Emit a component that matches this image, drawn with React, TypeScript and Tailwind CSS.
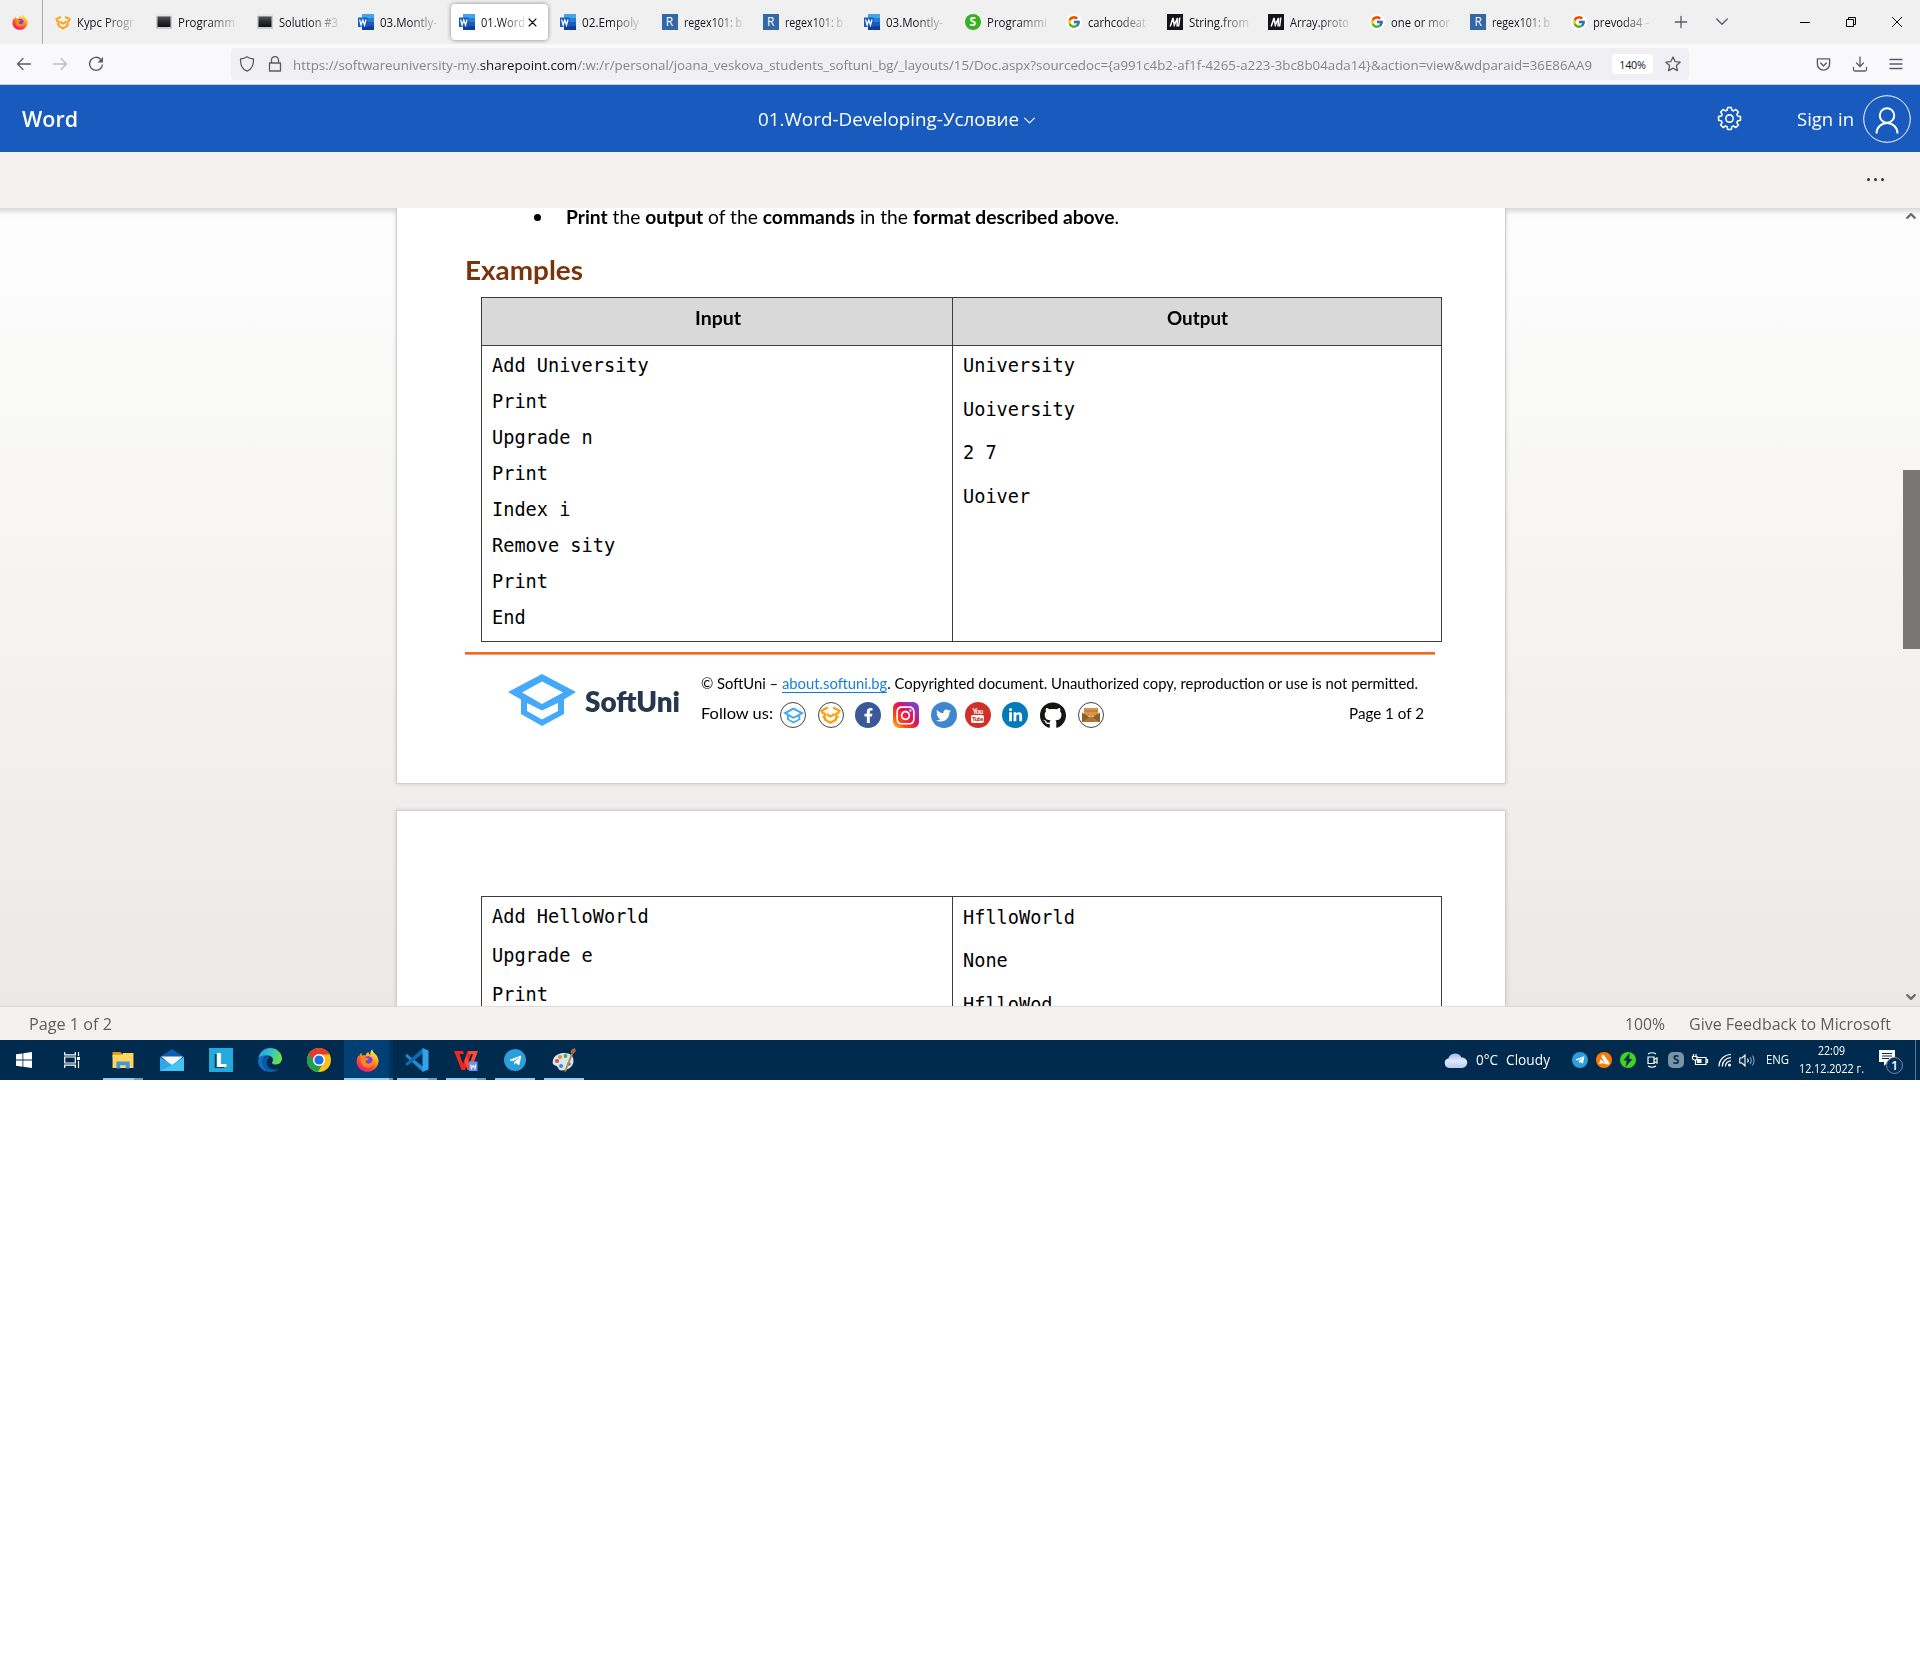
import React, { useLayoutEffect, useRef, useState } from "react";
import { FcGoogle } from "react-icons/fc";
import { FaGithub, FaFacebookF, FaTwitter, FaLinkedinIn, FaInstagram, FaTelegramPlane } from "react-icons/fa";

/* A single line of text squeezed or stretched to a given width. */
function Fit({ w, className = "", children }: { w: number; className?: string; children: React.ReactNode }) {
  const ref = useRef<HTMLSpanElement>(null);
  const [scale, setScale] = useState(1);
  useLayoutEffect(() => {
    if (ref.current && ref.current.offsetWidth) setScale(w / ref.current.getBoundingClientRect().width);
  }, []);
  return (
    <span className={"block shrink-0 whitespace-nowrap " + className} style={{ width: w }}>
      <span ref={ref} className="inline-block origin-left" style={{ transform: `scaleX(${scale})` }}>
        {children}
      </span>
    </span>
  );
}

const ui = "font-['Open_Sans','Noto_Sans',sans-serif]";
const doc = "font-['Lato','Open_Sans',sans-serif]";

function Firefox({ className }: { className: string }) {
  return (
    <svg viewBox="0 0 24 24" className={className}>
      <defs>
        <linearGradient id="ffx" x1="0.8" y1="0.05" x2="0.25" y2="1">
          <stop offset="0" stopColor="#fff44f" />
          <stop offset="0.35" stopColor="#ffa41c" />
          <stop offset="0.65" stopColor="#ff4a38" />
          <stop offset="1" stopColor="#e8148a" />
        </linearGradient>
      </defs>
      <path fill="url(#ffx)" d="M5.500 4 6.500 7C8 6.400 9 6.600 10 7c.6-2.500 1.800-3.500 3-4 0 1.600.8 2.400 1.800 3C15 3.500 15.500 1.500 17 .3c0 3 3 4.700 4.800 6.700C22.800 9 23.600 11 23.500 13c-.3 6-5.500 10.800-11.500 10.800S.7 19.500.6 13C.6 10 2 7.500 3 6.500c0 .6.200 1 .4 1.300C3.700 6.300 4.500 5 5.500 4Z" />
      <circle cx="12.500" cy="12.500" r="5" fill="#7d3fe0" />
      <path fill="#ff8a16" d="M5 10.500c1.500-2 4-2.300 6-1.300l2.500.9c-.5 1.200-2.500 1.200-3.300 2-.8 1 .2 3 2.600 3.200 2.500.1 4.500-1.600 4.700-4.300 1.600 3.600-.5 8.200-5 8.200S4.500 15.500 5 10.500Z" />
    </svg>
  );
}

function WordIcon() {
  return (
    <svg viewBox="0 0 16 16" className="size-4">
      <path fill="#41a5ee" d="M4 0h12v4H4z" />
      <path fill="#2b7cd3" d="M4 4h12v4H4z" />
      <path fill="#185abd" d="M4 8h12v4H4z" />
      <path fill="#103f91" d="M4 12h12v4H4z" />
      <path fill="#185abd" d="M0 3.500h9.500v9.500H0z" />
      <path fill="none" stroke="#fff" strokeWidth="1.300" d="m1.600 5.500 1.500 5.500 1.700-5 1.700 5L8 5.500" />
    </svg>
  );
}

function ConsoleIcon() {
  return (
    <svg viewBox="0 0 16 16" className="size-4">
      <defs>
        <linearGradient id="con" x1="0" y1="0" x2="0" y2="1">
          <stop offset="0" stopColor="#555" />
          <stop offset="0.5" stopColor="#2a2a2a" />
          <stop offset="1" stopColor="#111" />
        </linearGradient>
      </defs>
      <path fill="#c9cdd0" d="M0 0h16v15H0z" />
      <path fill="#e4e6e8" d="M0 0h16v2H0z" />
      <path fill="url(#con)" d="M1.500 2.500h13V13h-13z" />
    </svg>
  );
}

function CapBraces({ className }: { className: string }) {
  return (
    <svg viewBox="0 0 68 58" className={className} fill="none" stroke="#ff9f0a" strokeWidth="7.500">
      <path d="M25 5 5 15l4 8 7 2v6l-4 4 4 3v6l18 10 18-10v-6l4-3-4-4v-6l7-2 4-8L43 5M25 24v5l9 5 9-5v-5" />
    </svg>
  );
}

function CapLogo({ className }: { className: string }) {
  return (
    <svg viewBox="0 0 68 52" className={className}>
      <path
        fill="#44a9f8"
        fillRule="evenodd"
        d="M34 0 68 18 56 25.500V40L34 52 13 40V25.500L0 18ZM34 7.500 14 18.500 34 30 55 18.500ZM19 29v8l15 8.500L50 37v-8L34 36.500Z"
      />
    </svg>
  );
}

function RIcon() {
  return <span className={`flex size-4 items-center justify-center bg-[#3467a6] text-[12px] leading-none text-white ${ui}`}>R</span>;
}
function SIcon() {
  return <span className={`flex size-4 items-center justify-center rounded-full bg-[#37b024] text-[12px] leading-none font-bold text-white ${ui}`}>S</span>;
}
function MdnIcon() {
  return (
    <svg viewBox="0 0 16 16" className="size-4">
      <path fill="#15141a" d="M0 0h16v16H0z" />
      <path fill="none" stroke="#fff" strokeWidth="1.500" d="M3.200 12.500 6 4l1.300 7L10.500 4l-.5 8.500M12.800 3.500l-1.200 9" />
    </svg>
  );
}
function GIcon() {
  return (
    <span className="flex size-4 items-center justify-center rounded-full bg-white">
      <FcGoogle className="size-[14px]" />
    </span>
  );
}

const tabs: { icon: React.ReactNode; text: string; w: number; active?: boolean }[] = [
  { icon: <CapBraces className="h-[15px] w-4" />, text: "Курс Progr", w: 57 },
  { icon: <ConsoleIcon />, text: "Programm", w: 57 },
  { icon: <ConsoleIcon />, text: "Solution #3", w: 59 },
  { icon: <WordIcon />, text: "03.Montly-", w: 57 },
  { icon: <WordIcon />, text: "01.Word", w: 44, active: true },
  { icon: <WordIcon />, text: "02.Empoly", w: 57 },
  { icon: <RIcon />, text: "regex101: b", w: 58 },
  { icon: <RIcon />, text: "regex101: b", w: 58 },
  { icon: <WordIcon />, text: "03.Montly-", w: 57 },
  { icon: <SIcon />, text: "Programmi", w: 60 },
  { icon: <GIcon />, text: "carhcodeat", w: 58 },
  { icon: <MdnIcon />, text: "String.from", w: 60 },
  { icon: <MdnIcon />, text: "Array.proto", w: 59 },
  { icon: <GIcon />, text: "one or mor", w: 59 },
  { icon: <RIcon />, text: "regex101: b", w: 58 },
  { icon: <GIcon />, text: "prevoda4 -", w: 56 },
];

function Stroke({ d, className, w = 1.4 }: { d: string; className: string; w?: number }) {
  return (
    <svg viewBox="0 0 16 16" className={"shrink-0 " + className} fill="none" stroke="currentColor" strokeWidth={w} strokeLinecap="round" strokeLinejoin="round">
      <path d={d} />
    </svg>
  );
}

function TabBar() {
  return (
    <div className={`flex h-11 items-center bg-[#f0f0f0] text-[12px] text-[#15141a] ${ui}`}>
      <div className="flex h-full w-[43px] shrink-0 items-center border-r border-[#aeaeb0] pl-3">
        <Firefox className="size-4" />
      </div>
      <div className="flex pl-1">
        {tabs.map((t, i) => (
          <div key={i} className="w-[101.1px] shrink-0">
            <div className={"flex h-9 w-[97px] items-center rounded pl-2 " + (t.active ? "bg-white shadow-[0_0_4px_rgba(0,0,0,0.45)]" : "")}>
              <span className="flex w-4 shrink-0 justify-center">{t.icon}</span>
              <Fit w={t.w} className="mt-[2px] ml-1.5 [mask-image:linear-gradient(to_right,black_50%,rgba(0,0,0,0.15))]">
                {t.text}
              </Fit>
              {t.active && <Stroke d="M3 3l10 10M13 3l-10 10" className="ml-[2px] size-[11px]" w={1.8} />}
            </div>
          </div>
        ))}
      </div>
      <div className="flex flex-1 items-center text-[#5b5b66]">
        <Stroke d="M8 1.500v13M1.500 8h13" className="ml-[9px] size-[14px]" w={1.5} />
        <Stroke d="M2 4.500l6 6 6-6" className="ml-[27px] size-[14px]" w={1.6} />
        <div className="ml-auto flex items-center pr-[17px] text-black">
          <span className="h-px w-[10px] bg-black" />
          <svg viewBox="0 0 12 12" className="ml-[35px] size-[12px]" fill="none" stroke="currentColor">
            <path d="M1.500 3.500h7v7h-7zM3.500 3.500v-2h7v7h-2" />
          </svg>
          <svg viewBox="0 0 12 12" className="ml-[34px] size-[12px]" fill="none" stroke="currentColor">
            <path d="m1 1 10 10M11 1 1 11" />
          </svg>
        </div>
      </div>
    </div>
  );
}

function UrlBar() {
  return (
    <div className={`flex h-[41px] items-center border-b border-[#ccc] bg-[#f9f9fb] text-[#5b5b66] ${ui}`}>
      <Stroke d="M1.500 8h13M7 2.500 1.500 8 7 13.500" className="ml-4 size-4" w={1.3} />
      <Stroke d="M1.500 8h13M9 2.500 14.500 8 9 13.500" className="ml-5 size-4 text-[#bcbcc0]" w={1.3} />
      <svg viewBox="0 0 16 16" className="ml-5 size-4" fill="none" stroke="currentColor" strokeWidth="1.400">
        <path d="M12.800 3.400A6.500 6.500 0 1 0 14.500 8.500" />
        <path fill="currentColor" stroke="none" d="M15 1v5.500H9.500z" />
      </svg>
      <div className="ml-[127px] flex h-8 w-[1458px] shrink-0 items-center rounded bg-[#f0f0f4] pl-2">
        <Stroke d="M8 .8c2 1.600 4 2 6.500 2.200.2 5-1 10-6.500 12.200C2.500 13 1.300 8 1.500 3 4 2.800 6 2.400 8 .8Z" className="size-4" w={1.3} />
        <Stroke d="M2.500 7h11v8h-11zM4.500 7V4a3.500 3.500 0 0 1 7 0v3" className="ml-3 size-4" w={1.3} />
        <Fit w={1299} className="mt-[2px] ml-[10px] text-[13.5px] text-[#84848b]">
          https://softwareuniversity-my.<span className="text-[#15141a]">sharepoint.com</span>
          {"/:w:/r/personal/joana_veskova_students_softuni_bg/_layouts/15/Doc.aspx?sourcedoc={a991c4b2-af1f-4265-a223-3bc8b04ada14}&action=view&wdparaid=36E86AA9"}
        </Fit>
        <span className="ml-5 flex h-5 w-[41px] items-center justify-center rounded-[3px] bg-white pt-[2px] text-[10.8px] tracking-[-0.2px] text-[#15141a]">140%</span>
        <Stroke d="M8 1l2.100 4.600 5 .6-3.700 3.400 1 5L8 12.100 3.600 14.600l1-5L.9 6.200l5-.6z" className="ml-3 size-4" w={1.3} />
      </div>
      <div className="ml-auto flex items-center pr-4">
        <Stroke d="M1.500 2h13v5.500a6.500 6.500 0 0 1-13 0zM5 6.500l3 3 3-3" className="size-[15px]" w={1.5} />
        <Stroke d="M8 1v9M4.500 7 8 10.500 11.500 7M1.500 11.500V13.500q0 1.500 1.500 1.500h10q1.500 0 1.500-1.500V11.500" className="ml-[21px] size-4" w={1.3} />
        <Stroke d="M2 3.500h12M2 8h12M2 12.500h12" className="ml-5 size-4" w={1.3} />
      </div>
    </div>
  );
}

function WordHeader() {
  return (
    <div className={`flex h-[67px] items-center bg-[#185abd] text-white ${ui}`}>
      <Fit w={56} className="mt-[3px] ml-[22px] text-[21px] font-semibold">Word</Fit>
      <Fit w={261} className="mt-px ml-[680px] text-[19px]">01.Word-Developing-Условие</Fit>
      <Stroke d="M2 5l6 6 6-6" className="mt-[3px] ml-[4px] size-[13px]" w={1.4} />
      <svg viewBox="0 0 24 24" className="ml-[681px] size-[25px]" fill="none" stroke="currentColor" strokeWidth="1.500" strokeLinejoin="round">
        <path d="M10.300 1.500h3.400l.6 2.600 1.500.6 2.300-1.400 2.400 2.400-1.400 2.300.6 1.500 2.800.6v3.600l-2.800.7-.6 1.500 1.400 2.300-2.400 2.400-2.300-1.400-1.500.6-.6 2.700h-3.400l-.6-2.700-1.500-.6-2.300 1.400-2.400-2.400 1.400-2.300-.6-1.500-2.800-.7v-3.600l2.800-.6.6-1.500-1.400-2.300 2.400-2.400 2.300 1.400 1.500-.6z" />
        <circle cx="12" cy="12" r="3.500" />
      </svg>
      <Fit w={57} className="mt-px ml-[55px] text-[18.5px]">Sign in</Fit>
      <svg viewBox="0 0 48 48" className="ml-[9px] size-12" fill="none" stroke="currentColor">
        <circle cx="24" cy="24" r="23.300" />
        <circle cx="24" cy="20.500" r="7.200" strokeWidth="2" />
        <path strokeWidth="2" d="M13.500 38.500a10.500 10.500 0 0 1 21 0" />
      </svg>
    </div>
  );
}

function Line({ children, className }: { children: string; className: string }) {
  return <div className={"flex items-center whitespace-pre " + className}>{children}</div>;
}

const mono = "font-['DejaVu_Sans_Mono',monospace] text-[18.6px]";

function FooterIcon({ className = "", children }: { className?: string; children: React.ReactNode }) {
  return <span className={"flex size-[26px] shrink-0 items-center justify-center rounded-full " + className}>{children}</span>;
}

function PageOne() {
  return (
    <div className={`h-[576px] w-[1110px] border-x border-b border-[#cdd0d3] bg-white shadow-[0_0_4px_rgba(0,0,0,0.15)] ${doc}`}>
      <div className="flex h-[18px] items-center pl-[137px] text-[18.8px] leading-[18px] text-black">
        <span className="size-[7px] rounded-full bg-black" />
        <Fit w={553} className="ml-[25px]">
          <b>Print</b> the <b>output</b> of the <b>commands</b> in the <b>format described above</b>.
        </Fit>
      </div>
      <Fit w={118} className="mt-[26px] ml-[68px] h-9 text-[27px] leading-9 font-bold text-[#7a340a]">Examples</Fit>
      <div className="mt-[9px] ml-[84px] h-[345px] w-[961px] border border-[#3c3c3c]">
        <div className="flex h-[48px] border-b border-[#3c3c3c] bg-[#d9d9d9] text-[18.5px] font-bold text-black">
          <div className="flex w-[471px] items-center justify-center border-r border-[#3c3c3c] pb-[6px] pl-px">
            <Fit w={46}>Input</Fit>
          </div>
          <div className="flex flex-1 items-center justify-center pb-[6px]">
            <Fit w={61}>Output</Fit>
          </div>
        </div>
        <div className={`flex h-[295px] text-black ${mono}`}>
          <div className="w-[471px] border-r border-[#3c3c3c] pt-[2px] pl-[10px]">
            {["Add University", "Print", "Upgrade n", "Print", "Index i", "Remove sity", "Print", "End"].map((s, i) => (
              <Line key={i} className="h-9">{s}</Line>
            ))}
          </div>
          <div className="pl-[10px]">
            {["University", "Uoiversity", "2 7", "Uoiver"].map((s) => (
              <Line key={s} className="h-[43.5px] pb-[3px]">{s}</Line>
            ))}
          </div>
        </div>
      </div>
      <div className="mt-[10px] ml-[68px] h-[3px] w-[970px] border-b border-[#f3a06a] bg-[#ed6a1e]" />
      <div className="flex pt-[19px] pl-[111px]">
        <CapLogo className="h-[52px] w-[68px] shrink-0" />
        <Fit w={95} className="mt-[9px] ml-[9px] font-['Lato',sans-serif] text-[28px] leading-9 font-extrabold text-[#25384d]">SoftUni</Fit>
        <div className="ml-[21px] w-[724px] text-[14.8px] text-black">
          <Fit w={717} className="h-[18px] leading-[18px]">
            © SoftUni – <span className="border-b-[1.5px] border-[#0f7bd8] text-[#1a80d9]">about.softuni.bg</span>. Copyrighted document. Unauthorized copy, reproduction or use is not permitted.
          </Fit>
          <div className="mt-[10px] flex h-[26px] items-center">
            <Fit w={72} className="pb-1">Follow us:</Fit>
            <FooterIcon className="ml-[7px] border border-[#444]"><CapLogo className="h-[17px] w-[21px]" /></FooterIcon>
            <FooterIcon className="ml-[11.6px] border border-[#444]"><CapBraces className="h-[18px] w-[21px]" /></FooterIcon>
            <FooterIcon className="ml-[11.6px] bg-[#3b5998] text-white"><FaFacebookF className="size-[15px]" /></FooterIcon>
            <span className="ml-[11.6px] flex size-[26px] shrink-0 items-center justify-center rounded-[6px] bg-[linear-gradient(45deg,#ffd23c_0%,#f8500f_25%,#e0105c_55%,#8a3ac8_85%)] text-white">
              <FaInstagram className="size-[21px]" />
            </span>
            <FooterIcon className="ml-[11.9px] bg-[#4086cf] text-white"><FaTwitter className="size-[15px]" /></FooterIcon>
            <FooterIcon className="ml-[8px] flex-col bg-[#d03027] text-[7px] leading-[8px] font-black text-white">
              <span className="tracking-[-0.5px]">You</span>
              <span className="rounded-[2px] bg-white px-px text-[6px] tracking-[-0.5px] text-[#d03027]">Tube</span>
            </FooterIcon>
            <FooterIcon className="ml-[11.6px] bg-[#057ab8] text-white"><FaLinkedinIn className="size-[15px]" /></FooterIcon>
            <FooterIcon className="ml-[11.6px] text-[#161514]"><FaGithub className="size-[27px]" /></FooterIcon>
            <FooterIcon className="ml-[11.8px] border border-[#444]">
              <svg viewBox="0 0 18 16" className="h-4 w-[18px]">
                <path fill="#d9944a" d="M2 1h14v8H2z" />
                <path fill="#b06f2c" d="M2 3.500h14v1H2z" />
                <path fill="#8f5d26" d="M0 5.500 9 11l9-5.500V15H0z" />
                <path fill="#ad7737" d="m0 15 9-6 9 6z" />
              </svg>
            </FooterIcon>
            <Fit w={75} className="mr-px mb-1 ml-auto">Page 1 of 2</Fit>
          </div>
        </div>
      </div>
    </div>
  );
}

function PageTwo() {
  return (
    <div className="mt-[26px] h-[400px] w-[1110px] border border-[#cdd0d3] bg-white shadow-[0_0_4px_rgba(0,0,0,0.15)]">
      <div className={`mt-[85px] ml-[84px] flex h-[300px] w-[961px] border border-[#3c3c3c] text-black ${mono}`}>
        <div className="w-[471px] border-r border-[#3c3c3c] pt-px pl-[10px]">
          {["Add HelloWorld", "Upgrade e", "Print"].map((s) => (
            <Line key={s} className="h-[38.8px]">{s}</Line>
          ))}
        </div>
        <div className="pl-[10px]">
          {["HflloWorld", "None", "HflloWod"].map((s) => (
            <Line key={s} className="h-[43.5px] pb-[2px]">{s}</Line>
          ))}
        </div>
      </div>
    </div>
  );
}

function DocumentArea() {
  return (
    <div className="flex h-[798px] overflow-hidden bg-[linear-gradient(to_bottom,#d9d9d9_0,#fbfbfb_7px,#fdfdfd_20px,#f2f1ef_500px,#eae9e8_100%)]">
      <div className="w-[1902px] shrink-0 pl-[396px]">
        <PageOne />
        <PageTwo />
      </div>
      <div className="flex w-[18px] flex-col items-center text-[#6e6d6b]">
        <Stroke d="M3 10.500l5-5 5 5" className="mt-[2px] size-[12px]" w={3} />
        <div className="mt-[248px] ml-px h-[179px] w-[17px] bg-[#797775]" />
        <Stroke d="M3 5.500l5 5 5-5" className="mt-auto mb-[3px] size-[12px]" w={3} />
      </div>
    </div>
  );
}

function StatusBar() {
  return (
    <div className={`flex h-[34px] items-center border-t border-[#dcdbd9] bg-[#f3f2f0] pt-px text-[16.3px] text-[#605e5c] ${ui}`}>
      <Fit w={83} className="ml-[29px]">Page 1 of 2</Fit>
      <Fit w={40} className="ml-auto">100%</Fit>
      <Fit w={202} className="mr-[29px] ml-6">Give Feedback to Microsoft</Fit>
    </div>
  );
}

function TaskButton({ children, split, solid, active }: { children: React.ReactNode; split?: boolean; solid?: boolean; active?: boolean }) {
  return (
    <div className={"flex h-10 w-[49px] shrink-0 flex-col items-center"}>
      <div className={"flex h-[38px] w-full items-center justify-center pt-[2px] " + (active ? "border-r-4 border-[#00345f] bg-[#004075]" : "")}>{children}</div>
      <div className={"flex h-[2px] " + (active ? "w-[49px]" : "w-10")}>
        {(split || solid) && <span className="flex-1 bg-[#99cdf6]" />}
        {split && <span className={(active ? "w-[4px]" : "w-[9px]") + " bg-[#7c9cb5]"} />}
      </div>
    </div>
  );
}

function Taskbar() {
  return (
    <div className={`flex h-10 items-center bg-[#002b4e] text-white ${ui}`}>
      <div className="flex w-12 justify-center">
        <svg viewBox="0 0 16 16" className="size-4" fill="#fff">
          <path d="M0 2.300 6.500 1.400v6.200H0zM7.300 1.300 16 0v7.600H7.300zM0 8.400h6.500v6.300L0 13.700zM7.300 8.400H16V16l-8.700-1.200z" />
        </svg>
      </div>
      <div className="flex w-[50.5px] justify-center pr-[2px]">
        <svg viewBox="0 0 16 16" className="size-4" fill="none" stroke="#fff" strokeWidth="1.200">
          <path d="M.7 0v2.800h10.600V0M.7 16v-2.800h10.600V16M.7 5h10.600v6H.7zM14.500 0v4M14.500 9v7" />
          <path fill="#fff" stroke="none" d="M13 5h3v3h-3z" />
        </svg>
      </div>
      <TaskButton split>
        <svg viewBox="0 0 22 20" className="h-[19px] w-[22px]">
          <path fill="#e09c10" d="M0 1h8l2 2v4H0z" />
          <path fill="#ffd660" d="M0 4h10l1-2h11v16H0z" />
          <path fill="#3f97dc" d="M4 11h14v7.500h-4V15H8v3.500H4z" />
        </svg>
      </TaskButton>
      <TaskButton>
        <svg viewBox="0 0 24 22" className="h-[22px] w-6">
          <path fill="#0a5fb5" d="M12 0 24 8H0z" />
          <path fill="#f4f6f8" d="M1 7.500h22L12 17z" />
          <path fill="#2da8ee" d="M0 8l12 8 12-8v14H0z" />
          <path fill="#42c4f5" d="m24 8-12 8-12 6h24z" />
        </svg>
      </TaskButton>
      <TaskButton>
        <span className="flex size-6 items-center justify-center bg-[#21aadb] text-[20px] leading-none font-extrabold [text-shadow:-2px_1px_0_#0d3a5c]">L</span>
      </TaskButton>
      <TaskButton>
        <svg viewBox="0 0 24 24" className="size-6">
          <defs>
            <linearGradient id="edg" x1="0" y1="0" x2="1" y2="0.3">
              <stop offset="0" stopColor="#1b9de2" />
              <stop offset="0.55" stopColor="#35c1cf" />
              <stop offset="1" stopColor="#66e04f" />
            </linearGradient>
          </defs>
          <path fill="url(#edg)" d="M.3 10.500C1.300 4.500 6 .1 12 .1c7 0 12 5 12 10.500 0 3.400-2.500 5.900-6 5.900-3 0-4-1-4-1.800 0-.9 1-1.200 1-3.200 0-2-2.500-4-6-4-4 0-7 1-8.700 3Z" />
          <path fill="#0f6fce" d="M.1 12.500C.4 8.500 4 7.500 8.500 7.500c-3 1.500-4 4-4 6.500 0 5 4.500 9.500 9.500 9.500C6 25 0 19 .1 12.500Z" />
          <path fill="#0c59a4" d="M9 12c-1.500 6 3 9.500 8 9.500 2 0 3.500-.7 4.700-1.600C19.500 22.500 16.500 24 13 23.900 8 23.500 4 19 4.500 14 4.800 10.500 7 8.500 9.500 8 11 8 11.500 9 9 12Z" />
        </svg>
      </TaskButton>
      <TaskButton>
        <svg viewBox="0 0 24 24" className="size-6">
          <circle cx="12" cy="12" r="12" fill="#fbc116" />
          <path fill="#e33b2e" d="M1.600 6A12 12 0 0 1 22.400 6L22.400 6.500H12L7 15Z" />
          <path fill="#21a04a" d="M1.600 6a12 12 0 0 0 9.400 18l5.500-9.500H8z" />
          <circle cx="12" cy="12" r="6" fill="#fff" />
          <circle cx="12" cy="12" r="4.600" fill="#1d6fe8" />
        </svg>
      </TaskButton>
      <TaskButton split active>
        <Firefox className="ml-[3px] size-[23px]" />
      </TaskButton>
      <TaskButton split>
        <svg viewBox="0 0 24 24" className="size-6">
          <path fill="#1f8ad0" d="M0 8 2 6l16 12.500V24z" />
          <path fill="#0f6cb0" d="M0 16l2 2L18 5.500V0z" />
          <path fill="#2fa3ee" d="m17.500 0 6 2.500v19l-6 2.500z" />
        </svg>
      </TaskButton>
      <TaskButton split>
        <svg viewBox="0 0 24 24" className="size-6">
          <path fill="#f0281c" d="M0 3h9l1 3H5.500l3.500 10L13.500 3h5L11 22H7.500z" />
          <path fill="#ff4a36" d="M15 3h9l-7 19h-3.500L10.500 13l2.300-5 2.700 8L19 6h-5z" />
          <path fill="#6a94f0" d="M15 13.500h8.500V23H15z" />
          <path fill="none" stroke="#fff" strokeWidth="1.100" d="m16.800 16.500.7 4 1.700-3 1.700 3 .8-4" />
        </svg>
      </TaskButton>
      <TaskButton solid>
        <span className="flex size-[22px] items-center justify-center rounded-full bg-[#2b9fdc]"><FaTelegramPlane className="size-[13px]" /></span>
      </TaskButton>
      <TaskButton solid>
        <svg viewBox="0 0 24 24" className="size-6">
          <path fill="#d5e6f0" d="M11 5c7-.5 11 3 10.500 8.500C21 19 16 22.500 9.500 22.500 6 22.500 6.500 19 4.500 18S.5 17 .7 14C1 9 5 5.500 11 5Z" />
          <circle cx="5" cy="13" r="2" fill="#e14a3c" />
          <circle cx="8" cy="9" r="2" fill="#f08a2c" />
          <circle cx="13.500" cy="8" r="1.900" fill="#4ca647" />
          <circle cx="9" cy="18" r="2" fill="#3d87d0" />
          <circle cx="17" cy="16" r="1.700" fill="#3078c8" />
          <path stroke="#c48a40" strokeWidth="2" d="M13 23.500 20 6" />
          <path fill="#a86a42" d="m18.500 5 1-3.500L23 0l.8 3.500L21 6z" />
        </svg>
      </TaskButton>

      <svg viewBox="0 0 24 16" className="ml-auto h-4 w-6 shrink-0">
        <defs>
          <linearGradient id="cld" x1="0" y1="0" x2="0" y2="1">
            <stop offset="0" stopColor="#9cb8ea" />
            <stop offset="0.5" stopColor="#dfe9fa" />
            <stop offset="1" stopColor="#b7cdf2" />
          </linearGradient>
        </defs>
        <path fill="url(#cld)" d="M5 16a5 5 0 0 1-.5-9.800A7 7 0 0 1 17.500 5.500 5.200 5.200 0 0 1 18.500 16Z" />
      </svg>
      <Fit w={22} className="ml-[8px] text-[13.8px]">0°C</Fit>
      <Fit w={44} className="ml-[8px] text-[13.8px]">Cloudy</Fit>
      <span className="ml-[22px] flex size-4 items-center justify-center rounded-full bg-[#2b9fdc]"><FaTelegramPlane className="size-[10px]" /></span>
      <svg viewBox="0 0 16 16" className="ml-2 size-4">
        <circle cx="8" cy="8" r="8" fill="#ff7800" />
        <path fill="#fff" d="M5.800 3.200q1.500-1.200 2.600.5L13.500 11q.5 1.500-1.500 1.500L9.500 12 5.500 5zM2.800 12 4.800 7l5 5.200-3.300-1z" />
      </svg>
      <svg viewBox="0 0 16 16" className="ml-2 size-4">
        <circle cx="8" cy="8" r="8" fill="#3fd420" />
        <path fill="#002b4e" d="M9.500 1 3.500 8.500h3.300L5.500 15 12.500 7H9.300z" />
      </svg>
      <svg viewBox="0 0 16 16" className="ml-2 size-4" fill="none" stroke="#fff" strokeWidth="1.200">
        <path d="M4 5h6v6.500H4zM10 7.500l3-1.500v5L10 9.500M4 2q4-2.500 8 0M4 14q4 2.500 8 0" />
      </svg>
      <span className="ml-2 flex size-4 items-center justify-center rounded-[5px] bg-[#7b93a6] text-[12px] leading-none font-bold text-[#0b3252]">S</span>
      <svg viewBox="0 0 18 14" className="ml-[7px] h-[14px] w-[18px]" fill="none" stroke="#fff" strokeWidth="1.200">
        <path d="M6.500 4.500H15v7H4.500V8M15 6.500h1.500v3H15M2.500 1v2.500M5 1v2.500M1.500 3.500H6V6L4.500 7.500 1.500 6z" />
        <path fill="#fff" stroke="none" d="M6 6h4.500v4H6z" />
      </svg>
      <svg viewBox="0 0 16 16" className="ml-2 size-4" fill="none" stroke="#fff" strokeWidth="1.200">
        <path d="M2 14.500A12 12 0 0 1 14 2.500M5.200 14.500A8.800 8.800 0 0 1 14 5.700M8.400 14.500A5.600 5.600 0 0 1 14 8.900" />
        <circle cx="12.500" cy="13" r="1.500" fill="#fff" stroke="none" />
      </svg>
      <svg viewBox="0 0 16 14" className="ml-1.5 h-[15px] w-4" fill="none" stroke="#fff" strokeWidth="1.100">
        <path d="M.8 4.500H3l3-3v11l-3-3H.8zM8.500 5q1.500 2 0 4" />
        <path stroke="#8aa0b2" d="M11 3.500q2.500 3.500 0 7M13.500 2q3 5 0 10" />
      </svg>
      <Fit w={23} className="ml-[11px] text-[12px]">ENG</Fit>
      <div className="ml-[9px] flex w-[66px] flex-col items-center text-[12px]">
        <Fit w={27} className="h-[18px] leading-[18px]">22:09</Fit>
        <Fit w={65} className="h-[18px] leading-[18px]">12.12.2022 г.</Fit>
      </div>
      <div className="mt-[3px] ml-[15px] flex h-6 w-6 shrink-0">
        <svg viewBox="0 0 24 24" className="size-6">
          <path fill="#fff" d="M0 0h16v12H9l-4 4v-4H0z" />
          <path stroke="#002b4e" strokeWidth="1.200" d="M3 3.500h10M3 6h10M3 8.500h7" />
          <circle cx="15.500" cy="15.500" r="8" fill="#04315a" stroke="#6f8ba3" />
          <text x="15.500" y="20" textAnchor="middle" fontSize="12.500" fontWeight="600" fill="#fff" fontFamily="Open Sans">1</text>
        </svg>
      </div>
      <span className="mr-1 ml-[12px] h-full w-px shrink-0 bg-[#5c778f]" />
    </div>
  );
}

export default function App() {
  return (
    <div className="min-h-[1664px] w-[1920px] overflow-hidden bg-white">
      <TabBar />
      <UrlBar />
      <WordHeader />
      <div className="flex h-14 items-center justify-end gap-[4px] bg-[#f3f2f0] pr-[36px] pb-[2px]">
        <span className="size-[3px] rounded-full bg-[#333]" />
        <span className="size-[3px] rounded-full bg-[#333]" />
        <span className="size-[3px] rounded-full bg-[#333]" />
      </div>
      <DocumentArea />
      <StatusBar />
      <Taskbar />
    </div>
  );
}
